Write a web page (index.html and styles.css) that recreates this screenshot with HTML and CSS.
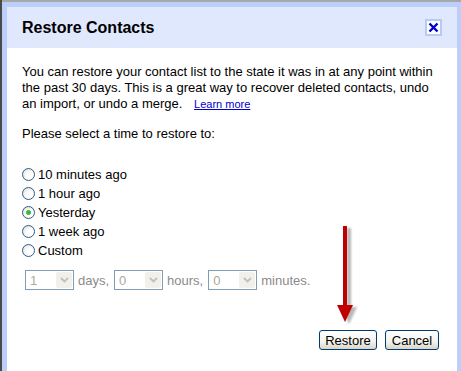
FILE: index.html
```html
<!DOCTYPE html>
<html lang="en">

<head>
  <meta charset="UTF-8" />
  <title>Restore Contacts</title>
  <link rel="stylesheet" href="styles.css">
</head>

<body>
  <div class="dialog">
    <div class="header">
      <span class="title">Restore Contacts</span>
      <span class="close">
        <svg width="11" height="11" viewBox="0 0 11 11">
          <path d="M1.5 1.5 L9.5 9.5 M9.5 1.5 L1.5 9.5" stroke="#0000cc" stroke-width="2.4" fill="none" />
        </svg>
      </span>
    </div>
    <div class="content">
      <p class="intro">You can restore your contact list to the state it was in at any point within<br>
        the past 30 days. This is a great way to recover deleted contacts, undo<br>
        an import, or undo a merge. <a class="learn" href="#">Learn more</a></p>
      <p class="prompt">Please select a time to restore to:</p>
      <div class="options">
        <label class="option"><input type="radio" name="when" class="radio">10 minutes ago</label>
        <label class="option"><input type="radio" name="when" class="radio">1 hour ago</label>
        <label class="option"><input type="radio" name="when" class="radio" checked>Yesterday</label>
        <label class="option"><input type="radio" name="when" class="radio">1 week ago</label>
        <label class="option"><input type="radio" name="when" class="radio">Custom</label>
      </div>
      <div class="custom">
        <span class="select"><span class="value">1</span><span class="drop"><svg width="9" height="6" viewBox="0 0 9 6"><path d="M1 1 L4.5 4.5 L8 1" stroke="#c2c0b8" stroke-width="1.8" fill="none" /></svg></span></span>
        <span class="unit">days,</span>
        <span class="select"><span class="value">0</span><span class="drop"><svg width="9" height="6" viewBox="0 0 9 6"><path d="M1 1 L4.5 4.5 L8 1" stroke="#c2c0b8" stroke-width="1.8" fill="none" /></svg></span></span>
        <span class="unit">hours,</span>
        <span class="select"><span class="value">0</span><span class="drop"><svg width="9" height="6" viewBox="0 0 9 6"><path d="M1 1 L4.5 4.5 L8 1" stroke="#c2c0b8" stroke-width="1.8" fill="none" /></svg></span></span>
        <span class="unit">minutes.</span>
      </div>
      <div class="actions">
        <button type="button" class="btn restore">Restore</button>
        <button type="button" class="btn cancel">Cancel</button>
      </div>
      <!-- annotation arrow pointing at the Restore button -->
      <svg class="pointer" width="24" height="100" viewBox="0 0 24 100">
        <defs>
          <filter id="blur" x="-50%" y="-10%" width="200%" height="120%">
            <feGaussianBlur stdDeviation="1.2" />
          </filter>
        </defs>
        <g fill="#9a9a9a" opacity="0.7" filter="url(#blur)" transform="translate(4 2)">
          <rect x="7" y="1" width="4" height="82" />
          <path d="M1 80 L17 80 L9 97 Z" />
        </g>
        <g fill="#c00000">
          <rect x="7" y="1" width="4" height="82" />
          <path d="M1 80 L17 80 L9 97 Z" />
        </g>
      </svg>
    </div>
  </div>
</body>

</html>
```

FILE: styles.css
```css
body {
  margin: 0;
  padding: 2px 0 0 2px;
  background: #a7a7a7;
  box-shadow: inset 2px 0 0 #4a4a4a;
  height: 371px;
  box-sizing: border-box;
  overflow: hidden;
  font-family: "Liberation Sans", Arial, sans-serif;
  font-size: 13px;
  color: #000;
}

.dialog {
  width: 450px;
  border: 5px solid #bccffb;
  background: #fff;
}

.header {
  display: flex;
  align-items: center;
  justify-content: space-between;
  height: 41px;
  padding: 0 15px;
  background: #e0e8fd;
}

.title {
  font-size: 16px;
  font-weight: bold;
}

.close {
  display: flex;
  align-items: center;
  justify-content: center;
  width: 13px;
  height: 13px;
  border: 2px solid #b4cbf8;
  background: #fff;
}

.content {
  position: relative;
  height: 319px;
  padding: 16px 15px 0 15px;
}

.intro {
  margin: 0;
  line-height: 16px;
}

.learn {
  margin-left: 8px;
  font-size: 11px;
  color: #0000cc;
}

.prompt {
  margin: 14px 0 0 0;
  line-height: 16px;
}

.options {
  display: flex;
  flex-direction: column;
  margin-top: 23px;
}

.option {
  display: flex;
  align-items: center;
  height: 19px;
}

.radio {
  appearance: none;
  width: 13px;
  height: 13px;
  margin: 0 3px 0 0;
  border: 1px solid #2f5b8a;
  border-radius: 50%;
  background: radial-gradient(circle at 65% 65%, #ffffff 30%, #dcdcd4 100%);
  box-sizing: border-box;
}

.radio:checked {
  background: radial-gradient(circle, #2fa82f 0, #4fc74f 2.2px, transparent 2.8px),
    radial-gradient(circle at 65% 65%, #ffffff 30%, #dcdcd4 100%);
}

.custom {
  display: flex;
  align-items: center;
  gap: 4px;
  margin: 10px 0 0 3px;
  color: #8a8a8a;
}

.select {
  display: flex;
  align-items: center;
  justify-content: space-between;
  width: 49px;
  height: 20px;
  border: 1px solid #7f9db9;
  box-sizing: border-box;
  background: #fff;
}

.value {
  padding-left: 4px;
  color: #aca899;
}

.drop {
  display: flex;
  align-items: center;
  justify-content: center;
  width: 16px;
  height: 16px;
  margin-right: 1px;
  background: #f1f0ea;
  border-radius: 2px;
}

.unit {
  margin-right: 1px;
}

.actions {
  display: flex;
  justify-content: flex-end;
  gap: 8px;
  margin: 40px 3px 0 0;
}

.btn {
  height: 20px;
  padding: 0;
  border: 1px solid #003c74;
  border-radius: 3px;
  background: linear-gradient(#ffffff, #f3f2ec 60%, #d8d4c8);
  font-family: "Liberation Sans", Arial, sans-serif;
  font-size: 13px;
  color: #000;
}

.restore {
  width: 58px;
}

.cancel {
  width: 54px;
}

.pointer {
  position: absolute;
  left: 329px;
  top: 177px;
}
```
